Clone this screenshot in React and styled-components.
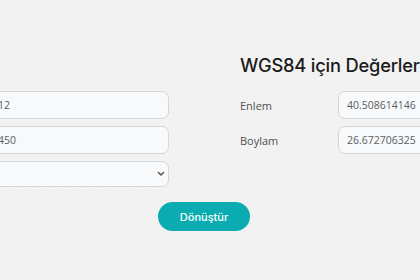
import React from "react";
import styled, { createGlobalStyle } from "styled-components";

const GlobalStyle = createGlobalStyle`
    html, body {
        margin: 0;
        padding: 0;
    }
    body {
        width: 420px;
        height: 280px;
        overflow: hidden;
        background-color: #f2f2f2;
        background-image: radial-gradient(circle, #eaeaea 0.7px, transparent 1.1px);
        background-size: 15px 15px;
        font-family: "Open Sans", "Liberation Sans", sans-serif;
    }
`;

const Page = styled.div`
    padding-top: 53px;
    margin-left: -151px;
    width: 710px;
`;

const Columns = styled.div`
    display: grid;
    grid-template-columns: 320px 319px;
    column-gap: 71px;
    align-items: start;
`;

const Heading = styled.h2`
    grid-column: 2;
    margin: 0 0 14px;
    font-family: Inter, "Noto Sans", sans-serif;
    font-weight: 500;
    font-size: 18.3px;
    line-height: 24px;
    color: #1b1b1b;
    letter-spacing: -0.2px;
    white-space: nowrap;
`;

const Rows = styled.div`
    grid-row: 2;
    display: grid;
    grid-template-columns: 98px 1fr;
    row-gap: 7px;
    align-items: center;
    align-content: start;
`;

const Label = styled.label`
    font-size: 11px;
    color: #4d5257;
`;

const Field = styled.input`
    box-sizing: border-box;
    width: 100%;
    height: 28px;
    padding: 0 8px;
    border: 1px solid #d3d6da;
    border-radius: 7px;
    background: #f8f9fa;
    font-family: "Open Sans", "Liberation Sans", sans-serif;
    font-size: 10.5px;
    color: #5a5f64;
    outline: none;
`;

const SelectWrap = styled.div`
    position: relative;
    height: 26px;

    svg {
        position: absolute;
        right: 4px;
        top: 9px;
        pointer-events: none;
    }
`;

const Select = styled.select`
    box-sizing: border-box;
    appearance: none;
    width: 100%;
    height: 26px;
    padding: 0 8px;
    border: 1px solid #d3d6da;
    border-radius: 7px;
    background: #f8f9fa;
    font-family: "Open Sans", "Liberation Sans", sans-serif;
    font-size: 10.5px;
    color: #5a5f64;
    outline: none;
`;

const Footer = styled.div`
    display: flex;
    justify-content: center;
    margin-top: 15px;
`;

const Button = styled.button`
    width: 92px;
    height: 29px;
    border: none;
    border-radius: 15px;
    background: #0aacb1;
    color: #ffffff;
    font-family: Inter, "Noto Sans", sans-serif;
    font-weight: 500;
    font-size: 11px;
    cursor: pointer;
`;

export default function App() {
    return (
        <>
            <GlobalStyle />
            <Page>
                <Columns>
                    <Heading>WGS84 için Değerler</Heading>
                    <Rows>
                        <Label>Sağa</Label>
                        <Field defaultValue="445081512" readOnly />
                        <Label>Yukarı</Label>
                        <Field defaultValue="4834212450" readOnly />
                        <Label>Dilim</Label>
                        <SelectWrap>
                            <Select defaultValue="">
                                <option value=""></option>
                            </Select>
                            <svg width="8" height="8" viewBox="0 0 8 8">
                                <path d="M1.5 2.5 L4 5 L6.5 2.5" fill="none" stroke="#555" strokeWidth="1.5" strokeLinecap="round" strokeLinejoin="round" />
                            </svg>
                        </SelectWrap>
                    </Rows>
                    <Rows>
                        <Label>Enlem</Label>
                        <Field defaultValue="40.508614146" readOnly />
                        <Label>Boylam</Label>
                        <Field defaultValue="26.672706325" readOnly />
                    </Rows>
                </Columns>
                <Footer>
                    <Button>Dönüştür</Button>
                </Footer>
            </Page>
        </>
    );
}
